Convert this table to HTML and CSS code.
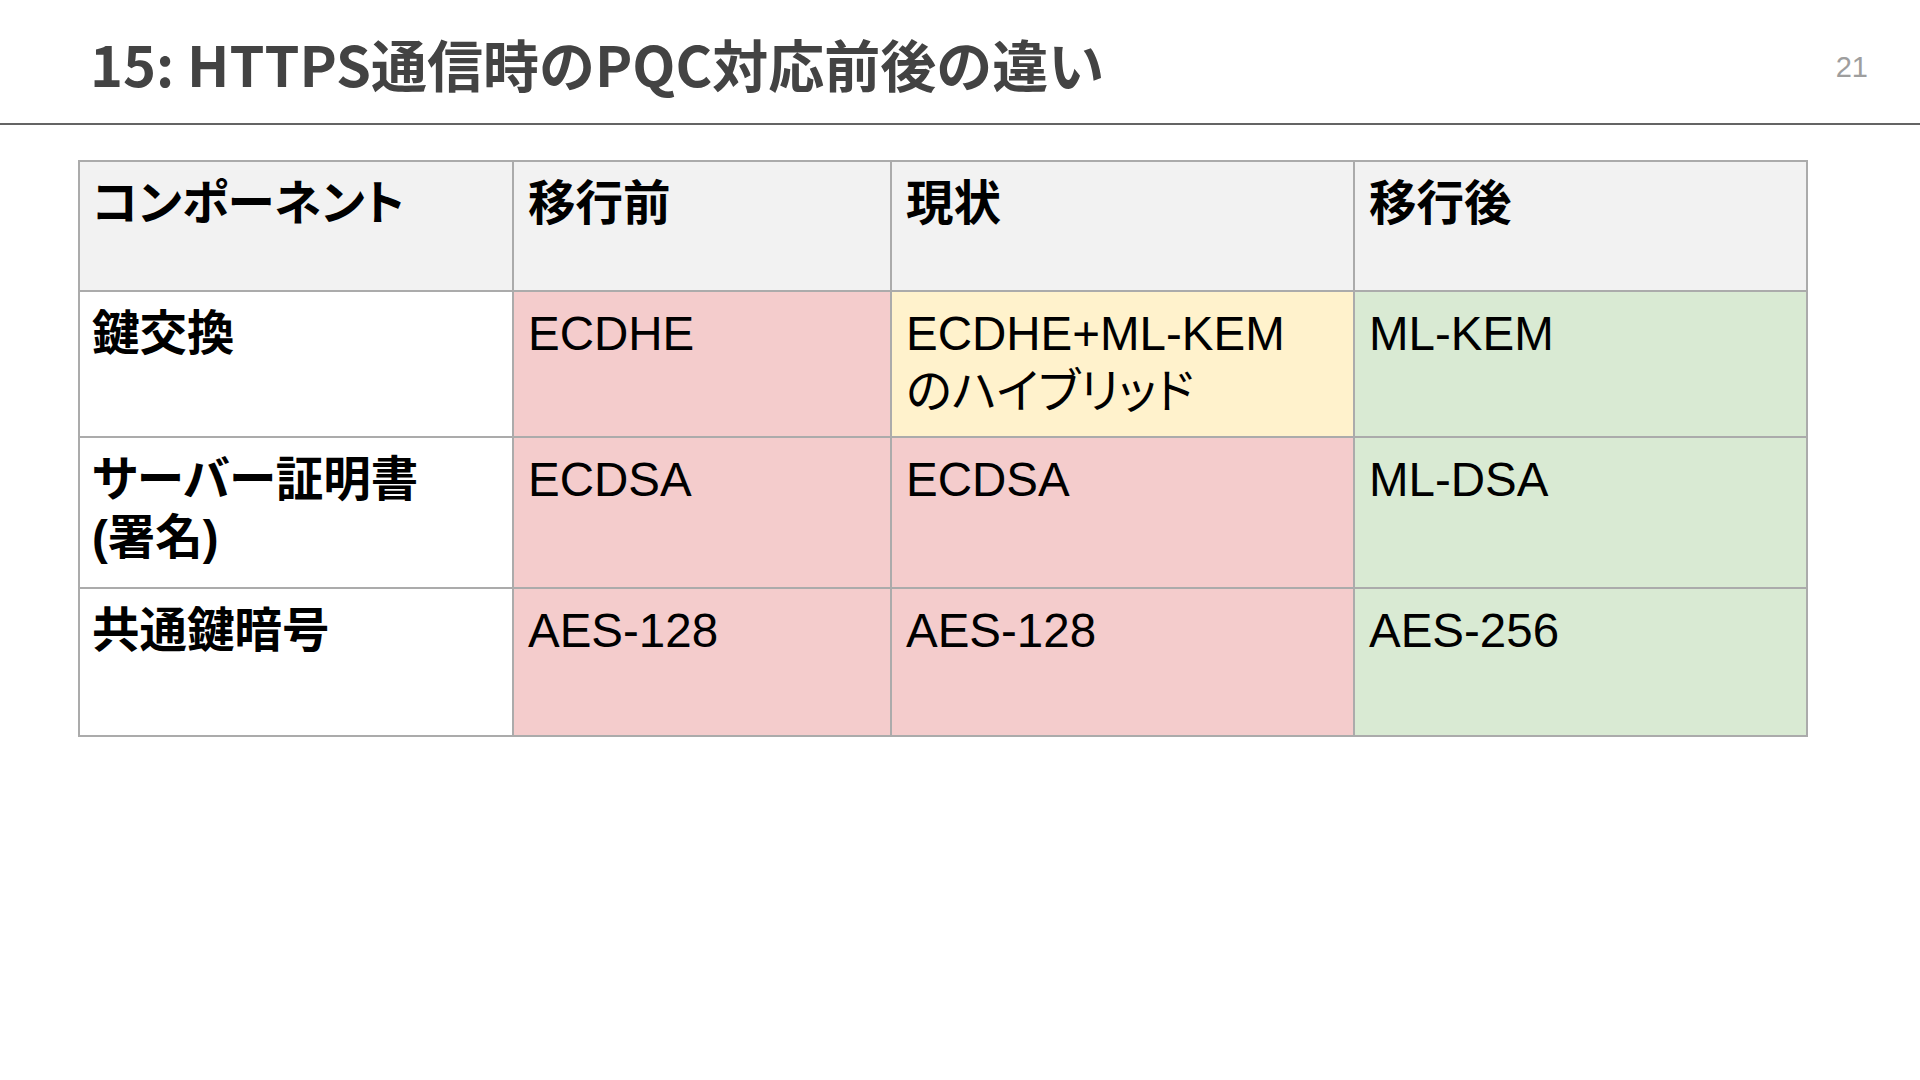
FILE: index.html
```html
<!DOCTYPE html>
<html lang="ja">
<head>
<meta charset="utf-8">
<title>HTTPS通信時のPQC対応前後の違い</title>
<link rel="stylesheet" href="styles.css">
</head>
<body>
<header class="slide-head">
  <h1 class="slide-title">15: HTTPS通信時のPQC対応前後の違い</h1>
  <span class="page-num">21</span>
</header>
<main class="slide-body">
  <table class="cmp">
    <colgroup>
      <col class="c1"><col class="c2"><col class="c3"><col class="c4">
    </colgroup>
    <tr class="row-h">
      <th class="first">コンポーネント</th>
      <th>移行前</th>
      <th>現状</th>
      <th>移行後</th>
    </tr>
    <tr class="row-1">
      <th class="label first">鍵交換</th>
      <td class="red">ECDHE</td>
      <td class="yellow">ECDHE+ML-KEM<br>のハイブリッド</td>
      <td class="green">ML-KEM</td>
    </tr>
    <tr class="row-2">
      <th class="label first">サーバー証明書<br>(署名)</th>
      <td class="red">ECDSA</td>
      <td class="red">ECDSA</td>
      <td class="green">ML-DSA</td>
    </tr>
    <tr class="row-3">
      <th class="label first">共通鍵暗号</th>
      <td class="red">AES-128</td>
      <td class="red">AES-128</td>
      <td class="green">AES-256</td>
    </tr>
  </table>
</main>
</body>
</html>
```
FILE: styles.css
```css
html, body {
  margin: 0;
  padding: 0;
  background: #ffffff;
}
body {
  width: 1920px;
  height: 1080px;
  overflow: hidden;
  font-family: "Liberation Sans", "Noto Sans CJK JP", sans-serif;
}
.slide-head {
  height: 125px;
  box-sizing: border-box;
  border-bottom: 2px solid #646464;
  display: flex;
  align-items: center;
  justify-content: space-between;
  padding: 2px 52px 0 90px;
}
.slide-title {
  margin: 0;
  font-family: "Noto Sans CJK JP", sans-serif;
  font-weight: 700;
  font-size: 56px;
  line-height: 1;
  color: #434343;
}
.page-num {
  font-family: "Liberation Sans", sans-serif;
  font-size: 29px;
  color: #9e9e9e;
  line-height: 1;
  margin-top: 10px;
}
.slide-body {
  padding: 35px 0 0 78px;
}
.cmp {
  border-collapse: collapse;
  table-layout: fixed;
  width: 1728px;
}
.c1 { width: 434px; }
.c2 { width: 378px; }
.c3 { width: 463px; }
.c4 { width: 453px; }
.cmp th, .cmp td {
  border: 2px solid #ababab;
  vertical-align: top;
  text-align: left;
  padding: 13px 14px 0 14px;
  font-size: 47.5px;
  line-height: 58px;
  color: #000000;
  font-feature-settings: "palt";
}
.cmp .first {
  padding-left: 12px;
}
.cmp th {
  font-weight: 700;
}
.cmp td {
  font-weight: 400;
}
.row-h th { background: #f2f2f2; height: 115px; }
.row-1 > * { height: 131px; }
.row-2 > * { height: 136px; }
.row-3 > * { height: 133px; }
.cmp .label { background: #ffffff; }
.red { background: #f4cccc; }
.yellow { background: #fff2cc; }
.green { background: #d9ead3; }
```
